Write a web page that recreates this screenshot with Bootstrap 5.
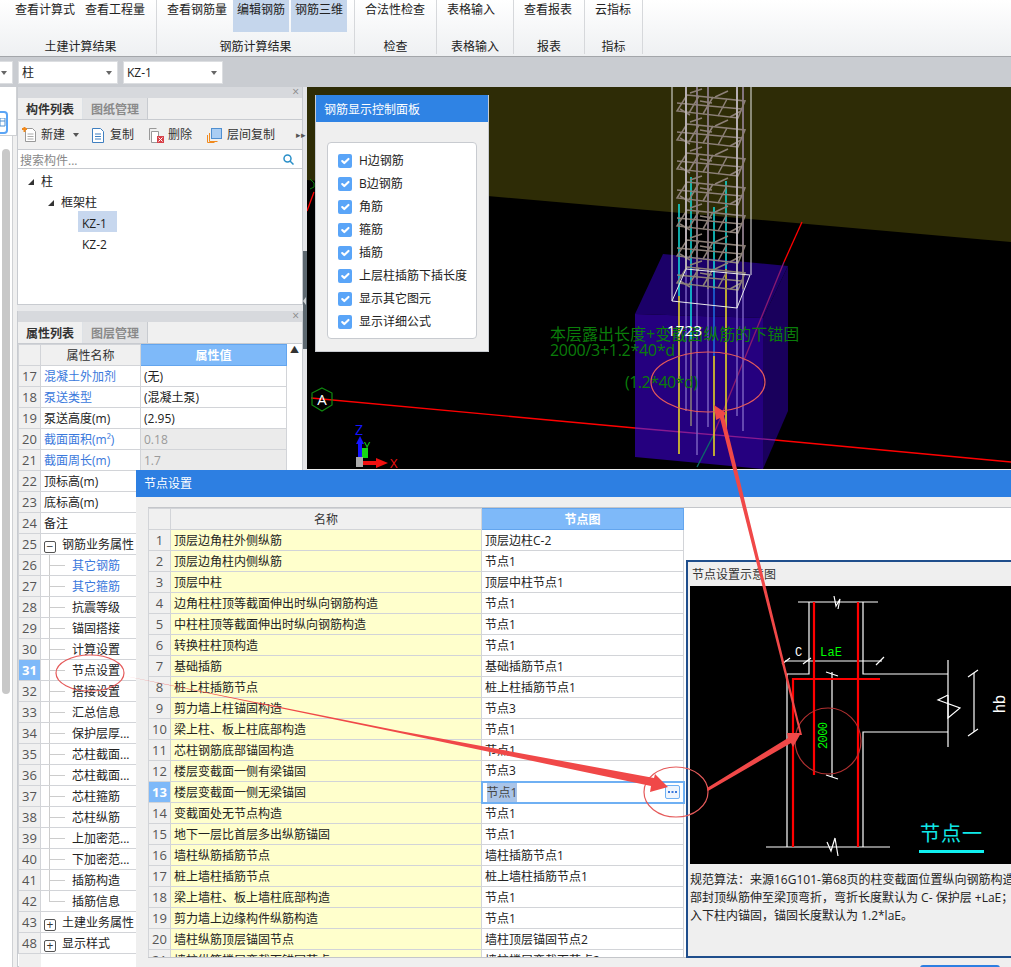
<!DOCTYPE html>
<html lang="zh">
<head>
<meta charset="UTF-8">
<title>节点设置</title>
<link href="https://cdn.jsdelivr.net/npm/bootstrap@5.3.0/dist/css/bootstrap.min.css" rel="stylesheet">
<style>
  body { width: 1011px; height: 967px; overflow: hidden; position: relative; margin: 0; background: #eceded; color: #222;
    font: 12px/16px "Open Sans", "Noto Sans CJK SC", sans-serif; }

  /* ribbon */
  .rib { height: 57px; padding-left: 5px; background: linear-gradient(#fff, #eef0f2); border-bottom: 1px solid #a3a6aa; }
  .rgrp { border-right: 1px solid #d6d8db; height: 54px; padding-left: 6px; position: relative; flex: none; }
  .rbtns { gap: 2px; height: 40px; }
  .rbt { padding: 2px 4px 0; height: 32px; white-space: nowrap; }
  .rbt-on { background: #c5d6ec; }
  .rlab { text-align: center; line-height: 14px; margin-left: -6px; }

  .cmbar { height: 30px; background: #c9ccd1; gap: 5px; padding-top: 4px; }
  .cmb { height: 23px; background: #fff; border: 1px solid #dcdee1; line-height: 21px; padding-left: 3px; position: relative; flex: none; }
  .cmb-a { width: 13px; border-left: 0; }
  .cmb-b { width: 100px; }
  .cmb-c { width: 100px; }
  .caret-d { width: 0; height: 0; border: 3px solid transparent; border-top: 4px solid #666; border-bottom: 0; position: absolute; right: 5px; top: 9px; }

  /* left side */
  .work { height: 880px; }
  .lside { width: 17px; flex: none; background: #f0f0f0; }
  .lside-top { height: 49px; background: #fff; border-right: 1px solid #cfd1d4; border-bottom: 1px solid #cfd1d4; padding-top: 24px; }
  .lside-ico { width: 8px; height: 23px; border: 2px solid #5ba5f5; border-left: 0; border-radius: 0 4px 4px 0; background: #fff; padding-top: 5px; }
  .lside-ico svg { display: block; }
  .lside-track { width: 13px; height: 831px; background: #fff; border-right: 1px solid #cfd1d4; padding: 13px 0 0 2px; }
  .lside-thumb { width: 8px; height: 545px; background: #c8c8c8; border-radius: 4px; }
  .panes { width: 286px; flex: none; background: #e8e9eb; }
  .pane1 { height: 218px; border: 1px solid #c8cbd0; border-top: 0; background: #fff; }
  .pane2 { height: 656px; margin-top: 6px; border: 1px solid #c8cbd0; border-top: 0; background: #fff; }
  .ptitle { height: 11px; background: #d7d9dd; line-height: 10px; text-align: right; padding-right: 3px; color: #888; font-size: 12px; }
  .tabz { background: #f0f0f0; border-bottom: 1px solid #c8cbd0; height: 22px; flex-wrap: nowrap; }
  .tabz .nav-link { height: 21px; width: 65px; padding: 4px 0 0; text-align: center; border: 0; border-radius: 0; border-right: 1px solid #c8cbd0; color: #8a8a8a; background: #e2e3e5; margin: 0; font-weight: 700; }
  .tabz .nav-link.active { color: #333; background: #f0f0f0; }
  .tbar { height: 30px; background: #f0f0f0; border-bottom: 1px solid #c8cbd0; position: relative; padding-top: 1px; }
  .tbit { position: relative; height: 28px; line-height: 28px; white-space: nowrap; color: #333; flex: none; }
  .srch { height: 19px; border-bottom: 1px solid #c8cbd0; color: #888; padding-left: 2px; line-height: 22px; }
  .tree-r { height: 21px; line-height: 25px; white-space: nowrap; }
  .tree-f { padding-top: 4px; line-height: 17px; }
  .tri { width: 0; height: 0; border-style: solid; border-width: 0 0 6px 6px; border-color: transparent transparent #333 transparent; display: inline-block; flex: none; }
  .tree-sel { background: #c7d7ee; padding: 0 4px; width: 39px; height: 21px; }
  .gridwrap { height: 634px; overflow: hidden; align-items: flex-start; }
  .scrl { width: 15px; flex: none; background: #fff; text-align: center; font-size: 9px; line-height: 12px; color: #333; }
  .split { width: 4px; flex: none; background: #e4e5e8; padding-top: 164px; }
  .split-th { height: 98px; background: #5d6870; padding-top: 46px; }
  .split-th svg { display: block; }
  .vport { width: 704px; height: 382px; flex: none; display: block; background: #000; }

  /* grids */
  .table.gtb { table-layout: fixed; margin: 0; border-collapse: collapse; --bs-table-bg: transparent; color: #222; }
  .table.gtb th, .table.gtb td { height: 21px; padding: 0 3px; line-height: 19px; font-size: 12px; font-weight: 400; white-space: nowrap; overflow: hidden; border: 1px solid #d2d4d8; vertical-align: middle; box-shadow: none; background-color: #fff; color: #222; }
  .table.gtb th { background-color: #f0f0f0; text-align: center; color: #333; }
  .table.gtb th.hcur { background-color: #7eb9f9; color: #fff; font-weight: 700; border: 1px solid #63a5ee; }
  .table.gtb td.rn { background-color: #f0f0f0; color: #555; text-align: center; font-size: 13px; padding: 0; }
  .table.gtb td.rn-on { background-color: #7eb9f9; color: #fff; font-weight: 700; }
  .table.gtb td.blu { color: #3a78dc; }
  .table.gtb td.dis { background-color: #ebebeb; color: #9a9a9a; }
  .table.gtb td.yel { background-color: #ffffcc; }
  .table.gtb td.lf { padding-left: 31px; background-image: linear-gradient(#ccc, #ccc), linear-gradient(#ccc, #ccc); background-repeat: no-repeat; background-position: 8px 0, 8px 50%; background-size: 1px 100%, 16px 1px; }
  .table.gtb td.lf-end { background-size: 1px 50%, 16px 1px; }
  .table.gtb td.cell-ed { border: 2px solid #6fb0f3; padding: 0 4px; position: relative; }
  .table.gtb td.blank { border: 0; }
  .seltx { background: #a9c4e8; padding: 1px 0; color: #444; }
  .morebtn { width: 15px; height: 14px; border: 1px solid #6fb0f3; border-radius: 2px; background: #eef5fd; position: absolute; right: 3px; top: 2px; display: flex; align-items: center; justify-content: center; }
  .xbox { width: 12px; height: 12px; border: 1px solid #555; border-radius: 2px; display: inline-block; line-height: 9px; text-align: center; margin-right: 6px; vertical-align: -2px; font-size: 12px; color: #333; background: #fff; }

  /* control panel */
  .ctlpan { position: absolute; left: 315px; top: 95px; width: 174px; height: 257px; background: #efefef; border: 1px solid #c8cbd0; border-top: 0; }
  .wnd-hd { background: #2f83e4; color: #fff; height: 27px; line-height: 30px; padding-left: 8px; }
  .ctlbox { margin: 20px 11px 0 11px; height: 197px; background: #fff; border: 1px solid #c8cbd0; border-radius: 4px; padding: 6px 0 0 10px; }
  .ctlbox .form-check { min-height: 23px; height: 23px; margin: 0; padding: 0; display: flex; align-items: center; gap: 7px; }
  .ctlbox .form-check-input { width: 14px; height: 14px; margin: 0; float: none; border: 0; border-radius: 2px; flex: none; }
  .ctlbox .form-check-input:checked { background-color: #5aa5f8; }
  .ctlbox .form-check-label { white-space: nowrap; color: #222; }

  /* dialog */
  .dlg { position: absolute; left: 136px; top: 470px; width: 875px; height: 497px; background: #efefef; }
  .dlg-hd { height: 27px; background: #2d7fe2; color: #fff; line-height: 28px; padding-left: 8px; }
  .dlg-grid { margin: 10px 0 0 12px; height: 451px; background: #fff; border-bottom: 1px solid #c4c6ca; border-top: 1px solid #c4c6ca; overflow: hidden; position: relative; }
  .dlg-foot { padding-right: 11px; }
  .dlg-ok { width: 80px; height: 30px; margin-top: 7px; background: #2d7fe2; border: 0; border-radius: 3px; }
  .subwin { position: absolute; left: 550px; top: 90px; width: 340px; height: 398px; background: #efefef; border: 1px solid #1f4e8c; border-width: 2px 0 2px 2px; padding-left: 2px; overflow: hidden; }
  .subwin-tt { height: 24px; line-height: 26px; padding-left: 2px; color: #333; }
  .subwin-pic { display: block; width: 321px; height: 278px; background: #000; }
  .subwin-tx { padding: 7px 0 0 0; line-height: 18px; white-space: nowrap; color: #222; }

  /* annotation layer */
  .notes { position: absolute; left: 0; top: 0; pointer-events: none; }
</style>
</head>
<body>
  <!-- ribbon -->
  <div class="rib d-flex">
    <div class="rgrp" style="width:152px">
      <div class="d-flex rbtns"><div class="rbt">查看计算式</div><div class="rbt">查看工程量</div></div>
      <div class="rlab">土建计算结果</div>
    </div>
    <div class="rgrp" style="width:198px">
      <div class="d-flex rbtns"><div class="rbt">查看钢筋量</div><div class="rbt rbt-on">编辑钢筋</div><div class="rbt rbt-on">钢筋三维</div></div>
      <div class="rlab">钢筋计算结果</div>
    </div>
    <div class="rgrp" style="width:82px">
      <div class="d-flex rbtns"><div class="rbt">合法性检查</div></div>
      <div class="rlab">检查</div>
    </div>
    <div class="rgrp" style="width:77px">
      <div class="d-flex rbtns"><div class="rbt">表格输入</div></div>
      <div class="rlab">表格输入</div>
    </div>
    <div class="rgrp" style="width:71px">
      <div class="d-flex rbtns"><div class="rbt">查看报表</div></div>
      <div class="rlab">报表</div>
    </div>
    <div class="rgrp" style="width:58px">
      <div class="d-flex rbtns"><div class="rbt">云指标</div></div>
      <div class="rlab">指标</div>
    </div>
  </div>

  <!-- combos -->
  <div class="cmbar d-flex">
    <div class="cmb cmb-a"><span class="caret-d"></span></div>
    <div class="cmb cmb-b">柱<span class="caret-d"></span></div>
    <div class="cmb cmb-c">KZ-1<span class="caret-d"></span></div>
  </div>

  <div class="work d-flex">
    <div class="lside">
      <div class="lside-top"><div class="lside-ico"><svg width="6" height="9" viewBox="0 0 6 9"><path d="M0 0h5v8H0zM0 3h5" fill="none" stroke="#4f8fd0"/></svg></div></div>
      <div class="lside-track"><div class="lside-thumb"></div></div>
    </div>

    <div class="panes">
      <div class="pane1">
        <div class="ptitle">×</div>
        <ul class="nav nav-tabs tabz"><li class="nav-item"><a class="nav-link active" href="#">构件列表</a></li><li class="nav-item"><a class="nav-link" href="#">图纸管理</a></li></ul>
        <div class="tbar d-flex">
          <div class="tbit d-flex align-items-center" style="margin-left:4px">
            <svg width="15" height="16" viewBox="0 0 15 16"><path d="M3.5 1.5h7l3 3v10h-10z" fill="#fff" stroke="#999"/><path d="M5.5 7h6M5.5 9.5h6M5.5 12h6" stroke="#aaa"/><path d="M0 2h5M2.5 0v5" stroke="#f08a1e" stroke-width="2"/></svg>
            <span class="ms-1">新建</span>
            <svg class="ms-2" width="6" height="4" viewBox="0 0 6 4"><path d="M0 0h6L3 4z" fill="#555"/></svg>
          </div>
          <div class="tbit d-flex align-items-center" style="margin-left:13px">
            <svg width="12" height="15" viewBox="0 0 12 15"><path d="M.5.5h8l3 3v11H.5z" fill="#fff" stroke="#3f7fc0"/><path d="M3 6h6M3 8.5h6M3 11h6" stroke="#3f7fc0"/></svg>
            <span style="margin-left:6px">复制</span>
          </div>
          <div class="tbit d-flex align-items-center" style="margin-left:15px">
            <svg width="15" height="15" viewBox="0 0 15 15"><path d="M2.5 3.5h7v11h-7z" fill="#fff" stroke="#999"/><path d="M.5 12V.5h7" fill="none" stroke="#999"/><rect x="8" y="8" width="7" height="7" fill="#d8414a"/><path d="M9.5 9.5l4 4M13.5 9.5l-4 4" stroke="#fff"/></svg>
            <span style="margin-left:4px">删除</span>
          </div>
          <div class="tbit d-flex align-items-center" style="margin-left:15px">
            <svg width="15" height="15" viewBox="0 0 15 15"><path d="M2.5 5v8.5h8" fill="none" stroke="#f08a1e"/><path d="M.5 7v7.5h7" fill="none" stroke="#f08a1e"/><rect x="4.5" y=".5" width="10" height="10" fill="#a9cdf3" stroke="#4f8fd0"/></svg>
            <span style="margin-left:5px">层间复制</span>
          </div>
          <div class="tbit" style="margin-left:21px;color:#555;font-size:9px">▸▸</div>
        </div>
        <div class="srch d-flex justify-content-between">搜索构件...
          <svg class="me-2 mt-1" width="11" height="11" viewBox="0 0 11 11"><circle cx="4.5" cy="4.5" r="3.5" fill="none" stroke="#2a8fc8" stroke-width="1.5"/><path d="M7 7l3.5 3.5" stroke="#2a8fc8" stroke-width="1.5"/></svg>
        </div>
        <div class="tree-r tree-f d-flex align-items-center" style="padding-left:10px"><span class="tri"></span><span style="margin-left:7px">柱</span></div>
        <div class="tree-r tree-f d-flex align-items-center" style="padding-left:30px"><span class="tri"></span><span style="margin-left:7px">框架柱</span></div>
        <div class="tree-r" style="padding-left:60px"><div class="tree-sel">KZ-1</div></div>
        <div class="tree-r" style="padding-left:64px">KZ-2</div>
      </div>

      <div class="pane2">
        <div class="ptitle">×</div>
        <ul class="nav nav-tabs tabz"><li class="nav-item"><a class="nav-link active" href="#">属性列表</a></li><li class="nav-item"><a class="nav-link" href="#">图层管理</a></li></ul>
        <div class="d-flex gridwrap">
          <table class="table gtb" style="width:268px">
            <colgroup><col style="width:22px"><col style="width:100px"><col style="width:146px"></colgroup>
            <thead><tr><th></th><th>属性名称</th><th class="hcur">属性值</th></tr></thead>
            <tbody>
              <tr><td class="rn">17</td><td class="blu">混凝土外加剂</td><td>(无)</td></tr>
              <tr><td class="rn">18</td><td class="blu">泵送类型</td><td>(混凝土泵)</td></tr>
              <tr><td class="rn">19</td><td>泵送高度(m)</td><td>(2.95)</td></tr>
              <tr><td class="rn">20</td><td class="blu">截面面积(m²)</td><td class="dis">0.18</td></tr>
              <tr><td class="rn">21</td><td class="blu">截面周长(m)</td><td class="dis">1.7</td></tr>
              <tr><td class="rn">22</td><td>顶标高(m)</td><td></td></tr>
              <tr><td class="rn">23</td><td>底标高(m)</td><td></td></tr>
              <tr><td class="rn">24</td><td>备注</td><td></td></tr>
              <tr><td class="rn">25</td><td><span class="xbox">−</span>钢筋业务属性</td><td></td></tr>
              <tr><td class="rn">26</td><td class="lf blu">其它钢筋</td><td></td></tr>
              <tr><td class="rn">27</td><td class="lf blu">其它箍筋</td><td></td></tr>
              <tr><td class="rn">28</td><td class="lf">抗震等级</td><td></td></tr>
              <tr><td class="rn">29</td><td class="lf">锚固搭接</td><td></td></tr>
              <tr><td class="rn">30</td><td class="lf">计算设置</td><td></td></tr>
              <tr><td class="rn rn-on">31</td><td class="lf">节点设置</td><td></td></tr>
              <tr><td class="rn">32</td><td class="lf">搭接设置</td><td></td></tr>
              <tr><td class="rn">33</td><td class="lf">汇总信息</td><td></td></tr>
              <tr><td class="rn">34</td><td class="lf">保护层厚...</td><td></td></tr>
              <tr><td class="rn">35</td><td class="lf">芯柱截面...</td><td></td></tr>
              <tr><td class="rn">36</td><td class="lf">芯柱截面...</td><td></td></tr>
              <tr><td class="rn">37</td><td class="lf">芯柱箍筋</td><td></td></tr>
              <tr><td class="rn">38</td><td class="lf">芯柱纵筋</td><td></td></tr>
              <tr><td class="rn">39</td><td class="lf">上加密范...</td><td></td></tr>
              <tr><td class="rn">40</td><td class="lf">下加密范...</td><td></td></tr>
              <tr><td class="rn">41</td><td class="lf">插筋构造</td><td></td></tr>
              <tr><td class="rn">42</td><td class="lf lf-end">插筋信息</td><td></td></tr>
              <tr><td class="rn">43</td><td><span class="xbox">+</span>土建业务属性</td><td></td></tr>
              <tr><td class="rn">48</td><td><span class="xbox">+</span>显示样式</td><td></td></tr>
              <tr><td class="rn blank"></td><td class="blank"></td><td class="blank"></td></tr>
            </tbody>
          </table>
          <div class="scrl">▲</div>
        </div>
      </div>
    </div>

    <div class="split"><div class="split-th"><svg width="4" height="8" viewBox="0 0 4 8"><path d="M3 0L0 4l3 4z" fill="#cfd3d6"/></svg></div></div>

    <!-- 3D view -->
    <svg class="vport" viewBox="307 88 704 382" font-family="'Open Sans','Noto Sans CJK SC',sans-serif">
      <defs>
        <g id="stirrup" fill="none" stroke="#8d8078" stroke-width="1.5">
          <path d="M687 96L745 102L738 119L677 112Z"/>
          <path d="M699 97L689 114M713 98L703 115M727 100L718 117M677 104L742 110"/>
          <path d="M690 94L702 90M715 98L728 92M680 110L690 116M730 118L741 112M700 102L712 104"/>
        </g>
      </defs>
      <rect x="307" y="88" width="704" height="382" fill="#000"/>
      <path d="M307 88H1011V243L307 181Z" fill="#2e2c06"/>

      <!-- footing block -->
      <path d="M635 315L663 255L788 267L763 319Z" fill="#1b0068"/>
      <path d="M763 319L788 267V412L763 470Z" fill="#19005c"/>
      <path d="M635 315L763 319V470L635 458Z" fill="#25007f"/>

      <!-- axes -->
      <path d="M311 399L635 429" stroke="#f00" stroke-width="1.3"/>
      <path d="M635 429L775 441" stroke="#8a1a90" stroke-width="1.3"/>
      <path d="M775 441L1011 463" stroke="#f00" stroke-width="1.3"/>
      <path d="M802 223L784 263" stroke="#f00" stroke-width="1.3"/>
      <path d="M784 263L713 437" stroke="#8a1a70" stroke-width="1.3"/>
      <path d="M713 437L697 468" stroke="#0d6a6a" stroke-width="1.3"/>
      <path d="M307 212L314 193" stroke="#f00" stroke-width="1.3"/>
      <path d="M310 180L314 184V188L310 190" fill="none" stroke="#0a7d0a"/>

      <!-- bars -->
      <g fill="none" stroke-width="1.5">
        <path d="M686 88V412M697 88V456M708 88V428M737 88V417M743 88V432" stroke="#7a5fc0"/>
        <path d="M686 88V270M697 88V280M708 88V290M737 88V280M743 88V290" stroke="#8d8078"/>
        <path d="M679 205V297M691 178V340M714 208V290M726 182V270" stroke="#12e0e0"/>
        <path d="M691 340V427" stroke="#8d8078"/>
        <path d="M714 290V357" stroke="#1b6fe0"/>
        <path d="M679 297V455M726 270V430M714 357V457" stroke="#f0e020"/>
      </g>
      <use href="#stirrup"/>
      <use href="#stirrup" y="29"/>
      <use href="#stirrup" y="58"/>
      <use href="#stirrup" y="87"/>
      <use href="#stirrup" y="115"/>
      <use href="#stirrup" y="145"/>
      <use href="#stirrup" y="172"/>
      <g fill="none" stroke="#e8e8e8">
        <path d="M672 88V302M751 88V276M686 88V270M737 88V309"/>
        <path d="M672 302L737 309L750 276L686 270Z"/>
      </g>

      <!-- labels -->
      <g fill="#0a7d0a" font-size="16">
        <text x="550" y="341">本层露出长度+变截面纵筋的下锚固</text>
        <text x="550" y="357" textLength="125">2000/3+1.2*40*d</text>
        <text x="625" y="389" textLength="73">(1.2*40*d)</text>
      </g>
      <text x="667" y="337" fill="#fff" font-size="15" textLength="35">1723</text>

      <path d="M322 389L332 394V406L322 412L312 406V394Z" fill="none" stroke="#0f8a0f" stroke-width="1.2"/>
      <text x="322" y="406" fill="#fff" font-size="15" text-anchor="middle">A</text>

      <!-- origin widget -->
      <path d="M360 437L364 445H362V460H358V445H356Z" fill="#1414ff"/>
      <rect x="362" y="449" width="6" height="10" fill="#14d814"/>
      <rect x="356" y="458" width="7" height="10" fill="#aaa"/>
      <path d="M363 462H376V459L388 464L376 469V466H363Z" fill="#f01010"/>
      <text x="355" y="436" fill="#1414ff" font-size="14">Z</text>
      <text x="364" y="451" fill="#14d814" font-size="11">Y</text>
      <text x="390" y="469" fill="#f01010" font-size="13">X</text>
    </svg>
  </div>

  <!-- rebar display panel -->
  <div class="ctlpan">
    <div class="wnd-hd">钢筋显示控制面板</div>
    <div class="ctlbox">
      <div class="form-check"><input class="form-check-input" type="checkbox" checked id="c1"><label class="form-check-label" for="c1">H边钢筋</label></div>
      <div class="form-check"><input class="form-check-input" type="checkbox" checked id="c2"><label class="form-check-label" for="c2">B边钢筋</label></div>
      <div class="form-check"><input class="form-check-input" type="checkbox" checked id="c3"><label class="form-check-label" for="c3">角筋</label></div>
      <div class="form-check"><input class="form-check-input" type="checkbox" checked id="c4"><label class="form-check-label" for="c4">箍筋</label></div>
      <div class="form-check"><input class="form-check-input" type="checkbox" checked id="c5"><label class="form-check-label" for="c5">插筋</label></div>
      <div class="form-check"><input class="form-check-input" type="checkbox" checked id="c6"><label class="form-check-label" for="c6">上层柱插筋下插长度</label></div>
      <div class="form-check"><input class="form-check-input" type="checkbox" checked id="c7"><label class="form-check-label" for="c7">显示其它图元</label></div>
      <div class="form-check"><input class="form-check-input" type="checkbox" checked id="c8"><label class="form-check-label" for="c8">显示详细公式</label></div>
    </div>
  </div>

  <!-- node settings dialog -->
  <div class="dlg">
    <div class="dlg-hd">节点设置</div>
    <div class="dlg-grid">
      <table class="table gtb" style="width:535px">
        <colgroup><col style="width:22px"><col style="width:311px"><col style="width:202px"></colgroup>
        <thead><tr><th></th><th>名称</th><th class="hcur">节点图</th></tr></thead>
        <tbody>
          <tr><td class="rn">1</td><td class="yel">顶层边角柱外侧纵筋</td><td>顶层边柱C-2</td></tr>
          <tr><td class="rn">2</td><td class="yel">顶层边角柱内侧纵筋</td><td>节点1</td></tr>
          <tr><td class="rn">3</td><td class="yel">顶层中柱</td><td>顶层中柱节点1</td></tr>
          <tr><td class="rn">4</td><td class="yel">边角柱柱顶等截面伸出时纵向钢筋构造</td><td>节点1</td></tr>
          <tr><td class="rn">5</td><td class="yel">中柱柱顶等截面伸出时纵向钢筋构造</td><td>节点1</td></tr>
          <tr><td class="rn">6</td><td class="yel">转换柱柱顶构造</td><td>节点1</td></tr>
          <tr><td class="rn">7</td><td class="yel">基础插筋</td><td>基础插筋节点1</td></tr>
          <tr><td class="rn">8</td><td class="yel">桩上柱插筋节点</td><td>桩上柱插筋节点1</td></tr>
          <tr><td class="rn">9</td><td class="yel">剪力墙上柱锚固构造</td><td>节点3</td></tr>
          <tr><td class="rn">10</td><td class="yel">梁上柱、板上柱底部构造</td><td>节点1</td></tr>
          <tr><td class="rn">11</td><td class="yel">芯柱钢筋底部锚固构造</td><td>节点1</td></tr>
          <tr><td class="rn">12</td><td class="yel">楼层变截面一侧有梁锚固</td><td>节点3</td></tr>
          <tr><td class="rn rn-on">13</td><td class="yel">楼层变截面一侧无梁锚固</td><td class="cell-ed"><span class="seltx">节点1</span><span class="morebtn"><svg width="9" height="2" viewBox="0 0 9 2"><path d="M0 0h2v2H0zM3.5 0h2v2h-2zM7 0h2v2H7z" fill="#3a78dc"/></svg></span></td></tr>
          <tr><td class="rn">14</td><td class="yel">变截面处无节点构造</td><td>节点1</td></tr>
          <tr><td class="rn">15</td><td class="yel">地下一层比首层多出纵筋锚固</td><td>节点1</td></tr>
          <tr><td class="rn">16</td><td class="yel">墙柱纵筋插筋节点</td><td>墙柱插筋节点1</td></tr>
          <tr><td class="rn">17</td><td class="yel">桩上墙柱插筋节点</td><td>桩上墙柱插筋节点1</td></tr>
          <tr><td class="rn">18</td><td class="yel">梁上墙柱、板上墙柱底部构造</td><td>节点1</td></tr>
          <tr><td class="rn">19</td><td class="yel">剪力墙上边缘构件纵筋构造</td><td>节点1</td></tr>
          <tr><td class="rn">20</td><td class="yel">墙柱纵筋顶层锚固节点</td><td>墙柱顶层锚固节点2</td></tr>
          <tr><td class="rn">21</td><td class="yel">墙柱纵筋楼层变截面锚固节点</td><td>墙柱楼层变截面节点2</td></tr>
        </tbody>
      </table>
    </div>
    <div class="d-flex justify-content-end dlg-foot"><button class="btn btn-primary dlg-ok" type="button"></button></div>

    <div class="subwin">
      <div class="subwin-tt">节点设置示意图</div>
      <svg class="subwin-pic" viewBox="690 586 321 278" font-family="'Liberation Mono',monospace">
        <g fill="none" stroke="#fff" stroke-width="1.2">
          <path d="M798 602H878M809 602V674H787V847M863 602V674H948M948 660V747M863 847V732H948M766 847H890"/>
          <path d="M785 661H882M974 673V732M832 672V777"/>
          <path d="M782 664L790 658M803 664L811 658M876 665L884 657M968 677L978 670M968 736L978 729M826 672L838 676M826 775L838 779" />
          <path d="M834 596L836 606L840 599L838 609M827 842L831 851L835 838L838 856M948 695L938 700L960 708L948 718V695"/>
        </g>
        <g fill="none" stroke="#f00" stroke-width="2.2">
          <path d="M814 602V775M858 602V847M793 847V679H880"/>
        </g>
        <text x="795" y="656" fill="#fff" font-size="12">C</text>
        <text x="820" y="656" fill="#0f0" font-size="12" textLength="22">LaE</text>
        <text x="827" y="749" fill="#0f0" font-size="12" transform="rotate(-90 827 749)" textLength="27">2000</text>
        <text x="1005" y="713" fill="#fff" font-size="16" font-family="'Liberation Sans',sans-serif" transform="rotate(-90 1005 713)">hb</text>
        <text x="920" y="841" fill="#10e8e8" font-size="20" font-family="'Noto Sans CJK SC',sans-serif" textLength="62">节点一</text>
        <rect x="919" y="850" width="65" height="3" fill="#10f0f0"/>
      </svg>
      <div class="subwin-tx">规范算法：来源16G101-第68页的柱变截面位置纵向钢筋构造<br>部封顶纵筋伸至梁顶弯折，弯折长度默认为 C- 保护层 +LaE；<br>入下柱内锚固，锚固长度默认为 1.2*laE。</div>
    </div>
  </div>

  <!-- red notes drawn over the screenshot -->
  <svg class="notes" width="1011" height="967" viewBox="0 0 1011 967">
    <g fill="none" stroke="#e55a5a" stroke-width="1.2">
      <ellipse cx="90" cy="673" rx="34" ry="18"/>
      <ellipse cx="708" cy="382" rx="57" ry="30"/>
      <ellipse cx="676" cy="792" rx="32" ry="25"/>
      <circle cx="828" cy="741" r="33" stroke="#b03030"/>
    </g>
    <g fill="#f04848">
      <path d="M125 676L400 731L654 778L655 774L668 787L650 792L651 786L400 733Z"/>
      <path d="M708 791L707 788L788 738L787 733L801 733L793 747L791 743Z"/>
      <path d="M802 735L800 735L720 418L716 420L714 405L726 413L724 416Z"/>
    </g>
  </svg>

  <script src="https://cdn.jsdelivr.net/npm/bootstrap@5.3.0/dist/js/bootstrap.bundle.min.js"></script>
</body>
</html>
